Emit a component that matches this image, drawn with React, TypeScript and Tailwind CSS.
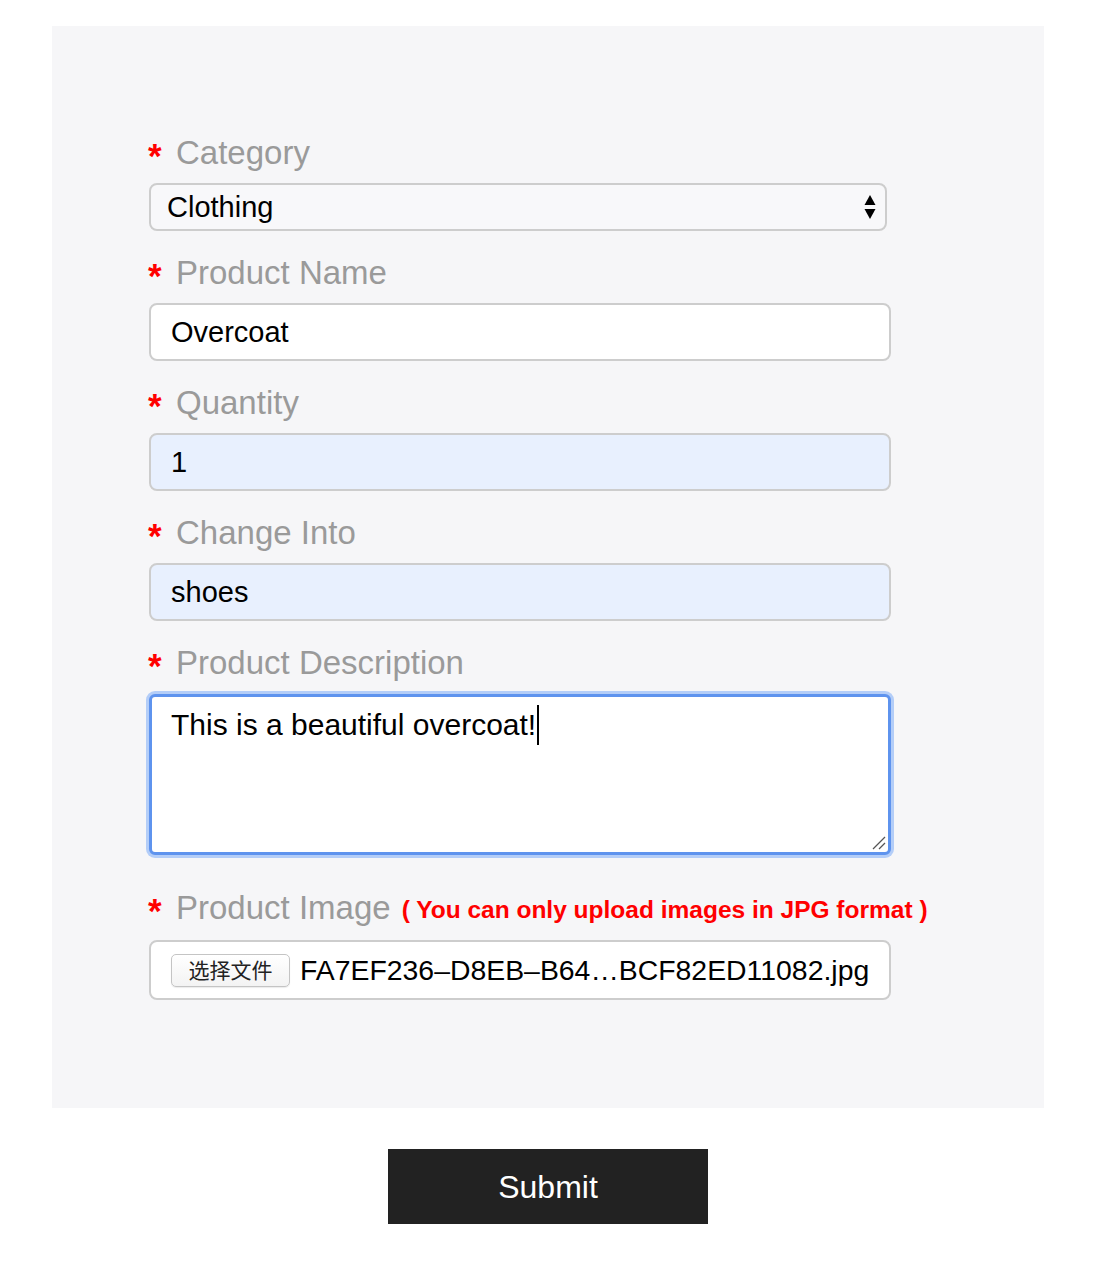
import React from "react";

const sans = { fontFamily: '"Liberation Sans", Arial, sans-serif' };

function Label({ text, extra, className = "" }: { text: string; extra?: React.ReactNode; className?: string }) {
  return (
    <div className={"flex items-center h-[40px] " + className}>
      <span className="w-[27px] text-[35px] font-bold leading-[40px] text-[#ff0000] relative top-[3px] -left-[1px]">*</span>
      <span className="text-[33px] leading-[40px] text-[#9a9a9a]">{text}</span>
      {extra}
    </div>
  );
}

export default function App() {
  return (
    <div className="min-h-[1274px] bg-white pt-[26px]" style={sans}>
      <div className="ml-[52px] w-[992px]">
        <div className="bg-[#f6f6f8] pt-[107px] pb-[108px] pl-[97px]">
          <Label text="Category" className="mb-[10px]" />
          <div className="relative w-[738px] h-[48px] border-2 border-[#cdcdcd] rounded-[8px] bg-[#f8f8fa] flex items-center pl-[16px] mb-[22px]">
            <span className="text-[29px] leading-none text-black">Clothing</span>
            <svg className="absolute right-[9px] top-1/2 -translate-y-1/2" width="12" height="26" viewBox="0 0 12 26">
              <path d="M6 1 L11.5 11 L0.5 11 Z" fill="#000" />
              <path d="M6 25 L11.5 15 L0.5 15 Z" fill="#000" />
            </svg>
          </div>

          <Label text="Product Name" className="mb-[10px]" />
          <div className="w-[742px] h-[58px] border-2 border-[#cdcdcd] rounded-[8px] bg-white flex items-center pl-[20px] mb-[22px]">
            <span className="text-[29px] leading-none text-black">Overcoat</span>
          </div>

          <Label text="Quantity" className="mb-[10px]" />
          <div className="w-[742px] h-[58px] border-2 border-[#cdcdcd] rounded-[8px] bg-[#e8f0fe] flex items-center pl-[20px] mb-[22px]">
            <span className="text-[29px] leading-none text-black">1</span>
          </div>

          <Label text="Change Into" className="mb-[10px]" />
          <div className="w-[742px] h-[58px] border-2 border-[#cdcdcd] rounded-[8px] bg-[#e8f0fe] flex items-center pl-[20px] mb-[22px]">
            <span className="text-[29px] leading-none text-black">shoes</span>
          </div>

          <Label text="Product Description" className="mb-[11px]" />
          <div className="relative w-[742px] h-[161px] border-[3px] border-[#5e93ee] rounded-[6px] bg-white shadow-[0_0_0_3px_#b3cdf8] pl-[19px] pt-[8px] mb-[33px]">
            <div className="flex items-center h-[40px]">
              <span className="text-[30px] leading-[40px] text-black">This is a beautiful overcoat!</span>
              <span className="inline-block w-[2px] h-[40px] bg-black ml-[1px]" />
            </div>
            <svg className="absolute right-[2px] bottom-[2px]" width="16" height="16" viewBox="0 0 16 16">
              <path d="M3 15 L15 3" stroke="#555" strokeWidth="1.3" />
              <path d="M9 15 L15 9" stroke="#555" strokeWidth="1.3" />
            </svg>
          </div>

          <Label
            text="Product Image"
            className="mb-[12px]"
            extra={
              <span className="ml-[11px] text-[24.5px] leading-[40px] font-bold text-[#ff0000] whitespace-nowrap relative top-[2px]">
                ( You can only upload images in JPG format )
              </span>
            }
          />
          <div className="w-[742px] h-[60px] border-2 border-[#cdcdcd] rounded-[8px] bg-white flex items-center pl-[20px]">
            <div
              className="w-[119px] h-[33px] border border-[#c4c4c4] rounded-[5px] bg-gradient-to-b from-white to-[#f3f3f3] flex items-center justify-center text-[21px] text-[#222] shadow-[0_1px_1px_rgba(0,0,0,0.08)]"
              style={{ fontFamily: '"Noto Sans CJK SC", "Liberation Sans", sans-serif' }}
            >
              选择文件
            </div>
            <span className="ml-[10px] text-[28.4px] leading-none text-black whitespace-nowrap">
              FA7EF236–D8EB–B64…BCF82ED11082.jpg
            </span>
          </div>
        </div>

        <div className="flex justify-center mt-[41px]">
          <button className="w-[320px] h-[75px] bg-[#222222] text-white text-[32px] leading-none">Submit</button>
        </div>
      </div>
    </div>
  );
}
